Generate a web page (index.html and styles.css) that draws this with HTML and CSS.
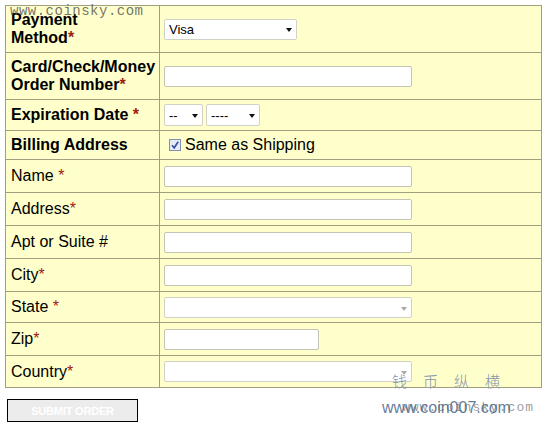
FILE: index.html
```html
<!DOCTYPE html>
<html lang="en">
<head>
<meta charset="utf-8">
<title>Payment</title>
<link rel="stylesheet" href="styles.css">
</head>
<body>
<div class="page">
  <table class="form-table">
    <colgroup><col class="col-label"><col class="col-field"></colgroup>
    <tr class="r-tall">
      <td class="label bold">Payment<br>Method<span class="req">*</span></td>
      <td class="field"><span class="sel w-pay"><select class="select"><option>Visa</option></select></span></td>
    </tr>
    <tr class="r-tall">
      <td class="label bold">Card/Check/Money<br>Order Number<span class="req">*</span></td>
      <td class="field"><input class="text w-full" type="text"></td>
    </tr>
    <tr class="r-exp">
      <td class="label bold">Expiration Date <span class="req">*</span></td>
      <td class="field">
        <div class="pair">
          <span class="sel w-mon"><select class="select tall"><option>--</option></select></span>
          <span class="sel w-yr"><select class="select tall"><option>----</option></select></span>
        </div>
      </td>
    </tr>
    <tr class="r-bill">
      <td class="label bold">Billing Address</td>
      <td class="field">
        <label class="check">
          <span class="box"><svg width="10" height="10" viewBox="0 0 10 10"><path d="M2 5.2 L4.2 7.8 L8.2 1.8" fill="none" stroke="#2f4fa8" stroke-width="1.6"/></svg></span>
          <span>Same as Shipping</span>
        </label>
      </td>
    </tr>
    <tr class="r-std">
      <td class="label">Name <span class="req">*</span></td>
      <td class="field"><input class="text w-full" type="text"></td>
    </tr>
    <tr class="r-std">
      <td class="label">Address<span class="req">*</span></td>
      <td class="field"><input class="text w-full" type="text"></td>
    </tr>
    <tr class="r-std">
      <td class="label">Apt or Suite #</td>
      <td class="field"><input class="text w-full" type="text"></td>
    </tr>
    <tr class="r-std">
      <td class="label">City<span class="req">*</span></td>
      <td class="field"><input class="text w-full" type="text"></td>
    </tr>
    <tr class="r-state">
      <td class="label">State <span class="req">*</span></td>
      <td class="field"><span class="sel light w-full"><select class="select"><option></option></select></span></td>
    </tr>
    <tr class="r-std">
      <td class="label">Zip<span class="req">*</span></td>
      <td class="field"><input class="text w-zip" type="text"></td>
    </tr>
    <tr class="r-last">
      <td class="label">Country<span class="req">*</span></td>
      <td class="field"><span class="sel light w-full"><select class="select"><option></option></select></span></td>
    </tr>
  </table>
  <div class="actions"><button class="submit" type="button">SUBMIT ORDER</button></div>
</div>
<div class="wm wm-top">www.coinsky.com</div>
<div class="wm wm-cn">钱币纵横</div>
<div class="wm wm-site">www.coin007.com</div>
<div class="wm wm-bottom">www.coinsky.com</div>
</body>
</html>
```
FILE: styles.css
```css
html, body { margin: 0; padding: 0; background: #fff; }
body {
  font-family: "Liberation Sans", Arial, sans-serif;
  font-size: 16px;
  color: #000;
  width: 546px;
  height: 426px;
  overflow: hidden;
  position: relative;
}
.page { padding: 5px 0 0 5px; }

.form-table {
  border-collapse: collapse;
  table-layout: fixed;
  width: 537px;
  border: 1px solid #a19f80;
  background: #ffffcc;
}
.col-label { width: 154px; }
.form-table td {
  border: 1px solid #a19f80;
  line-height: 18px;
  vertical-align: middle;
}
.label { padding: 0 5px; }
.bold { font-weight: bold; }
.req { color: #a02010; font-weight: normal; }
.bold .req { font-weight: bold; }
.field { padding: 0 4px; }

.r-tall td { padding-top: 5px; padding-bottom: 5px; height: 36px; }
.r-exp td { padding-top: 4px; padding-bottom: 4px; }
.r-bill td { padding-top: 5px; padding-bottom: 5px; }
.r-std td { padding-top: 6px; padding-bottom: 5px; }
.r-state td { padding-top: 5px; padding-bottom: 4px; }
.r-last td { padding-top: 5px; padding-bottom: 5px; }
.r-std td.label, .r-state td.label, .r-exp td.label, .r-last td.label { padding-top: 0; padding-bottom: 0; }

.text {
  display: block;
  box-sizing: border-box;
  height: 21px;
  margin: 0;
  border: 1px solid #c4c3b4;
  border-radius: 2px;
  background: #fff;
  padding: 0 4px;
  font: 13px "Liberation Sans", Arial, sans-serif;
}
.w-full { width: 248px; }
.w-zip { width: 155px; }
.w-pay { width: 133px; }
.w-mon { width: 39px; }
.w-yr { width: 54px; }

.sel { position: relative; display: block; }
.pair { display: flex; gap: 3px; }
.select {
  -webkit-appearance: none;
  appearance: none;
  display: block;
  box-sizing: border-box;
  width: 100%;
  height: 21px;
  margin: 0;
  border: 1px solid #d2d1c6;
  border-radius: 2px;
  background: #fff;
  padding: 0 4px;
  font: 13px "Liberation Sans", Arial, sans-serif;
  color: #000;
}
.select.tall { height: 22px; }
.sel::after {
  content: "";
  position: absolute;
  right: 5px;
  top: 50%;
  margin-top: -1px;
  border-left: 3.5px solid transparent;
  border-right: 3.5px solid transparent;
  border-top: 4px solid #111;
}
.sel.light::after { border-top-color: #aaa; right: 5px; }

.check { display: flex; align-items: center; gap: 4px; padding-left: 5px; line-height: 18px; }
.box {
  display: block;
  box-sizing: border-box;
  width: 12px;
  height: 12px;
  border: 1px solid #8290ad;
  background: #e6eaf4;
  position: relative;
}
.box svg { display: block; margin: 0; }

.actions { padding: 11px 0 0 2px; }
.submit {
  display: block;
  box-sizing: border-box;
  width: 131px;
  height: 23px;
  margin: 0;
  padding: 0;
  border: 1px solid #000;
  background: #ececec;
  color: #fff;
  font: bold 11px "Liberation Sans", Arial, sans-serif;
  letter-spacing: -0.2px;
}

.wm { position: absolute; white-space: nowrap; pointer-events: none; }
.wm-top {
  left: 10px; top: 4px;
  font: 14px/14px "Liberation Mono", monospace;
  letter-spacing: 0.5px;
  color: rgba(80, 80, 80, 0.8);
}
.wm-cn {
  left: 392px; top: 372px;
  font: 15px/17px "Noto Sans CJK SC", sans-serif;
  letter-spacing: 16px;
  color: #8494ac;
  font-weight: 300;
}
.wm-site {
  left: 382px; top: 399px;
  font: 16px/17px "Liberation Sans", Arial, sans-serif;
  color: rgba(70, 100, 135, 0.85);
}
.wm-bottom {
  left: 402px; top: 401px;
  font: 13px/14px "Liberation Mono", monospace;
  letter-spacing: 1px;
  color: rgba(90, 90, 90, 0.6);
}
```
